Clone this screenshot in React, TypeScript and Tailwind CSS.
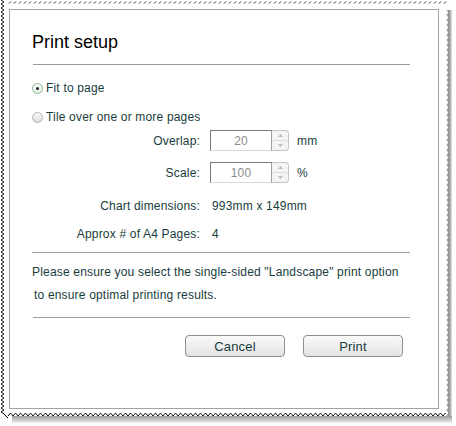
import React from "react";

const font = "font-['Liberation_Sans',Arial,sans-serif]";

// torn paper edges round the dialog
const TornEdges = () => {
  const left: string[] = [];
  for (let y = 0; y <= 412; y += 4) {
    left.push(`1,${y}`, `4,${y + 2}`);
  }
  const bottom: string[] = [];
  for (let x = 8; x <= 446; x += 5) {
    bottom.push(`${x},416`, `${x + 2.5},413`);
  }
  const dashes: JSX.Element[] = [];
  for (let x = 9; x <= 444; x += 5) {
    dashes.push(<line key={x} x1={x} y1={3.5} x2={x + 2} y2={1.5} stroke="#222" strokeWidth={1} />);
  }
  const shadow: string[] = ["452,10"];
  for (let y = 10; y <= 414; y += 5) {
    shadow.push(`446,${y}`, `448.5,${y + 2.5}`);
  }
  shadow.push("446,416", "452,416");

  return (
    <svg className="absolute inset-0 pointer-events-none" width={456} height={426} viewBox="0 0 456 426">
      <defs>
        <linearGradient id="rs" x1="0" x2="1" y1="0" y2="0">
          <stop offset="0" stopColor="#c8c8c8" />
          <stop offset="0.45" stopColor="#8a8a8a" />
          <stop offset="1" stopColor="#e2e2e2" />
        </linearGradient>
        <linearGradient id="bs" x1="0" x2="0" y1="0" y2="1">
          <stop offset="0" stopColor="#9a9a9a" />
          <stop offset="1" stopColor="#f2f2f2" />
        </linearGradient>
      </defs>
      <polygon points={shadow.join(" ")} fill="url(#rs)" />
      <rect x={12} y={416} width={440} height={7} fill="url(#bs)" />
      <polyline points={left.join(" ")} fill="none" stroke="#111" strokeWidth={1} />
      <polyline points="3,413 8,418" fill="none" stroke="#111" strokeWidth={1} />
      <polyline points={bottom.join(" ")} fill="none" stroke="#111" strokeWidth={1} />
      {dashes}
    </svg>
  );
};

const Radio = ({ checked }: { checked?: boolean }) => (
  <span
    className={
      checked
        ? "flex items-center justify-center w-[11px] h-[11px] rounded-full border border-[#86b486] bg-gradient-to-b from-[#ffffff] to-[#e6efe6]"
        : "flex items-center justify-center w-[11px] h-[11px] rounded-full border border-[#b4b4b4] bg-gradient-to-b from-[#f8f8f8] to-[#dcdcdc]"
    }
  >
    {checked && <span className="w-[3px] h-[3px] rounded-full bg-[#222]" />}
  </span>
);

const Spinner = ({ value }: { value: string }) => (
  <div className="flex items-stretch h-[21px]">
    <div className="w-[62px] flex items-center justify-center border border-t-[#7c7c7c] border-l-[#7c7c7c] border-b-[#d8d8d8] border-r-[#a0a0a0] bg-white text-[#8c8c8c]">
      {value}
    </div>
    <div className="w-[17px] flex flex-col border border-l-0 border-[#c4c4c4] rounded-r-[4px] bg-[#f4f4f4]">
      <div className="flex-1 flex items-center justify-center border-b border-[#dedede]">
        <svg width="5" height="3" viewBox="0 0 5 3">
          <polygon points="0,3 2.5,0 5,3" fill="#bdbdbd" />
        </svg>
      </div>
      <div className="flex-1 flex items-center justify-center">
        <svg width="5" height="3" viewBox="0 0 5 3">
          <polygon points="0,0 5,0 2.5,3" fill="#bdbdbd" />
        </svg>
      </div>
    </div>
  </div>
);

const Button = ({ label }: { label: string }) => (
  <button className="w-[100px] h-[22px] rounded-[4px] border border-[#8f8f8f] bg-gradient-to-b from-[#fafafa] to-[#e4e4e4] text-[13px] tracking-[0.2px] text-[#183c3c] leading-none">
    {label}
  </button>
);

const App = () => {
  return (
    <div className={`relative w-[456px] h-[426px] bg-white overflow-hidden ${font}`}>
      <TornEdges />
      <div className="ml-[9px] mt-[9px] w-[430px] h-[400px] border border-[#a3a3a3] bg-white text-[12px] tracking-[0.18px] text-[#183c3c]">
        <div className="pl-[22px] pr-[28px]">
          <h1 className="pt-[21px] text-[18px] leading-[22px] tracking-normal text-black">Print setup</h1>
          <div className="mt-[11px] ml-px h-px bg-[#9c9c9c]" />

          <div className="mt-[15px] h-[16px] flex items-center gap-[3px]">
            <Radio checked />
            <span>Fit to page</span>
          </div>
          <div className="mt-[13px] h-[16px] flex items-center gap-[3px]">
            <Radio />
            <span>Tile over one or more pages</span>
          </div>

          <div className="mt-[5px] grid grid-cols-[168px_1fr] gap-x-[10px]">
            <div className="h-[21px] flex items-center justify-end">Overlap:</div>
            <div className="h-[21px] flex items-center gap-[8px]">
              <Spinner value="20" />
              <span>mm</span>
            </div>

            <div className="mt-[11px] h-[21px] flex items-center justify-end">Scale:</div>
            <div className="mt-[11px] h-[21px] flex items-center gap-[8px]">
              <Spinner value="100" />
              <span>%</span>
            </div>

            <div className="mt-[12px] h-[21px] flex items-center justify-end">Chart dimensions:</div>
            <div className="mt-[12px] h-[21px] flex items-center pl-[2px]">993mm x 149mm</div>

            <div className="mt-[7px] h-[21px] flex items-center justify-end">Approx # of A4 Pages:</div>
            <div className="mt-[7px] h-[21px] flex items-center pl-[2px]">4</div>
          </div>

          <div className="mt-[8px] h-px bg-[#9c9c9c]" />

          <p className="mt-[8px] leading-[23px]">
            <span className="block">Please ensure you select the single-sided "Landscape" print option</span>
            <span className="block ml-[2px]">to ensure optimal printing results.</span>
          </p>

          <div className="mt-[10px] ml-px h-px bg-[#9c9c9c]" />

          <div className="mt-[17px] flex justify-end gap-[18px] pr-[7px]">
            <Button label="Cancel" />
            <Button label="Print" />
          </div>
        </div>
      </div>
    </div>
  );
};

export default App;
